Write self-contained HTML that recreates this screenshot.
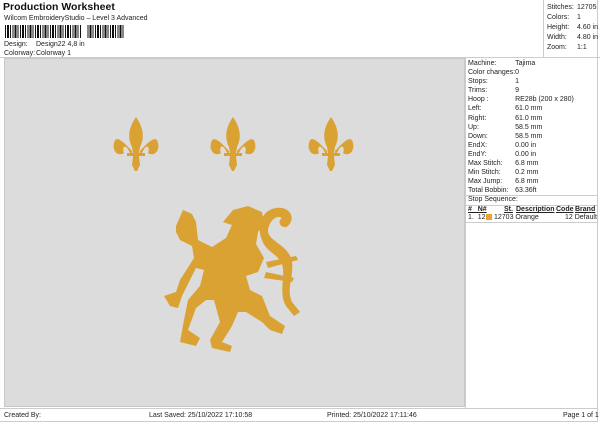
<!DOCTYPE html>
<html><head><style>
*{margin:0;padding:0;box-sizing:border-box}
body{width:600px;height:424px;background:#fff;font-family:"Liberation Sans",sans-serif;color:#222;position:relative;overflow:hidden;font-size:7px}
.a{position:absolute;white-space:nowrap}
.g{position:absolute;left:4px;top:58px;width:461px;height:349px;background:#dcdcdc;border:1px solid #c8c8c8}
.r td{padding:0;height:9.1px;font-size:7px;line-height:9.1px}
</style></head><body>
<div class="a" style="left:3px;top:1px;font-size:10.5px;font-weight:bold;color:#111">Production Worksheet</div>
<div class="a" style="left:4px;top:15px;font-size:7px">Wilcom EmbroideryStudio – Level 3 Advanced</div>
<div class="a" style="left:5px;top:25px;width:120px;height:13px;background:repeating-linear-gradient(90deg,#111 0 1px,#fff 1px 2px,#111 2px 4px,#fff 4px 5px,#111 5px 6px,#fff 6px 7.5px)"></div>
<div class="a" style="left:81px;top:25px;width:6px;height:14px;background:#fff"></div>
<div class="a" style="left:4px;top:41px">Design:</div><div class="a" style="left:36px;top:41px">Design22 4,8 in</div>
<div class="a" style="left:4px;top:50px">Colorway:</div><div class="a" style="left:36px;top:50px">Colorway 1</div>
<div class="a" style="left:0;top:57px;width:600px;height:1px;background:#ccc"></div>
<div class="a" style="left:543px;top:0;width:1px;height:57px;background:#ccc"></div>
<div class="a" style="left:597px;top:0;width:1px;height:422px;background:#ccc"></div>
<div class="a" style="left:547px;top:3px;line-height:10px">Stitches:<br>Colors:<br>Height:<br>Width:<br>Zoom:</div>
<div class="a" style="left:577px;top:3px;line-height:10px">12705<br>1<br>4.60 in<br>4.80 in<br>1:1</div>
<div class="g"></div>
<svg class="a" style="left:0;top:0" width="600" height="424" viewBox="0 0 600 424">
<defs><g id="f" fill="#d9a232">
<path d="M0 -28 C-7 -18 -9 -8 -4 2 L-3 8 L3 8 L4 2 C9 -8 7 -18 0 -28Z"/>
<path d="M-4 6 C-10 0 -20 -12 -22 -2 C-24 6 -18 12 -12 8 C-14 4 -12 -2 -8 4 C-6 8 -5 9 -4 10Z"/>
<path d="M4 6 C10 0 20 -12 22 -2 C24 6 18 12 12 8 C14 4 12 -2 8 4 C6 8 5 9 4 10Z"/>
<rect x="-9" y="8" width="18" height="3"/>
<path d="M-3 11 L3 11 L4 20 L1 26 L-1 26 L-4 20Z"/>
</g></defs>
<use href="#f" x="136" y="145"/><use href="#f" x="233" y="145"/><use href="#f" x="331" y="145"/>
<g fill="#d9a232">
<path d="M176 226 L183 210 L192 214 L196 222 L198 240 L212 247 L226 238 L232 225 L223 222 L233 210 L248 206 L262 212 L264 224 L258 232 L256 244 L264 258 L258 272 L246 276 L250 290 L262 296 L270 316 L285 326 L282 334 L270 330 L262 322 L246 312 L238 312 L232 326 L222 342 L232 346 L230 352 L212 348 L210 340 L220 322 L214 300 L206 300 L196 308 L188 330 L200 338 L196 346 L180 342 L184 320 L188 300 L200 286 L204 270 L196 268 L188 284 L182 296 L178 308 L170 306 L164 296 L176 292 L180 280 L194 258 L192 246 L180 240 L176 232Z"/>
<path d="M262 240 C256 226 262 210 276 208 C290 206 296 218 288 226 C282 230 276 222 282 218 C276 214 268 222 268 232 C270 242 290 246 292 262 C294 276 286 290 292 302 L300 312 L294 316 L286 306 C278 292 286 276 282 264 C278 254 266 252 262 240Z"/>
<path d="M266 262 L296 256 L298 260 L268 268Z M266 272 L294 278 L292 282 L264 278Z"/>
</g>
</svg>
<div class="a" style="left:465px;top:58px;width:1px;height:350px;background:#ccc"></div>
<table class="a r" style="left:468px;top:59px;border-collapse:collapse">
<tr><td style="width:47px">Machine:</td><td>Tajima</td></tr>
<tr><td>Color changes:</td><td>0</td></tr>
<tr><td>Stops:</td><td>1</td></tr>
<tr><td>Trims:</td><td>9</td></tr>
<tr><td>Hoop :</td><td>RE28b (200 x 280)</td></tr>
<tr><td>Left:</td><td>61.0 mm</td></tr>
<tr><td>Right:</td><td>61.0 mm</td></tr>
<tr><td>Up:</td><td>58.5 mm</td></tr>
<tr><td>Down:</td><td>58.5 mm</td></tr>
<tr><td>EndX:</td><td>0.00 in</td></tr>
<tr><td>EndY:</td><td>0.00 in</td></tr>
<tr><td>Max Stitch:</td><td>6.8 mm</td></tr>
<tr><td>Min Stitch:</td><td>0.2 mm</td></tr>
<tr><td>Max Jump:</td><td>6.8 mm</td></tr>
<tr><td>Total Bobbin:</td><td>63.36ft</td></tr>
</table>
<div class="a" style="left:466px;top:195px;width:131px;height:1px;background:#ccc"></div>
<div class="a" style="left:468px;top:196px">Stop Sequence:</div>
<div class="a" style="left:466px;top:205px;width:131px;height:1px;background:#ccc"></div>
<div class="a" style="left:468px;top:206px;font-weight:bold;text-decoration:underline">#&nbsp;&nbsp; N#</div>
<div class="a" style="left:504px;top:206px;font-weight:bold;text-decoration:underline">St.</div>
<div class="a" style="left:516px;top:206px;font-weight:bold;text-decoration:underline">Description</div>
<div class="a" style="left:556px;top:206px;font-weight:bold;text-decoration:underline">Code</div>
<div class="a" style="left:575px;top:206px;font-weight:bold;text-decoration:underline">Brand</div>
<div class="a" style="left:468px;top:214px">1.&nbsp; 12</div>
<div class="a" style="left:486px;top:214px;width:6px;height:6px;background:#f0a030"></div>
<div class="a" style="left:494px;top:214px">12703 Orange</div>
<div class="a" style="left:565px;top:214px">12 Default</div>
<div class="a" style="left:466px;top:222px;width:131px;height:1px;background:#ccc"></div>
<div class="a" style="left:0;top:408px;width:598px;height:1px;background:#ccc"></div>
<div class="a" style="left:0;top:421px;width:598px;height:1px;background:#ccc"></div>
<div class="a" style="left:4px;top:412px">Created By:</div>
<div class="a" style="left:149px;top:412px">Last Saved: 25/10/2022 17:10:58</div>
<div class="a" style="left:327px;top:412px">Printed: 25/10/2022 17:11:46</div>
<div class="a" style="left:563px;top:412px">Page 1 of 1</div>
</body></html>
